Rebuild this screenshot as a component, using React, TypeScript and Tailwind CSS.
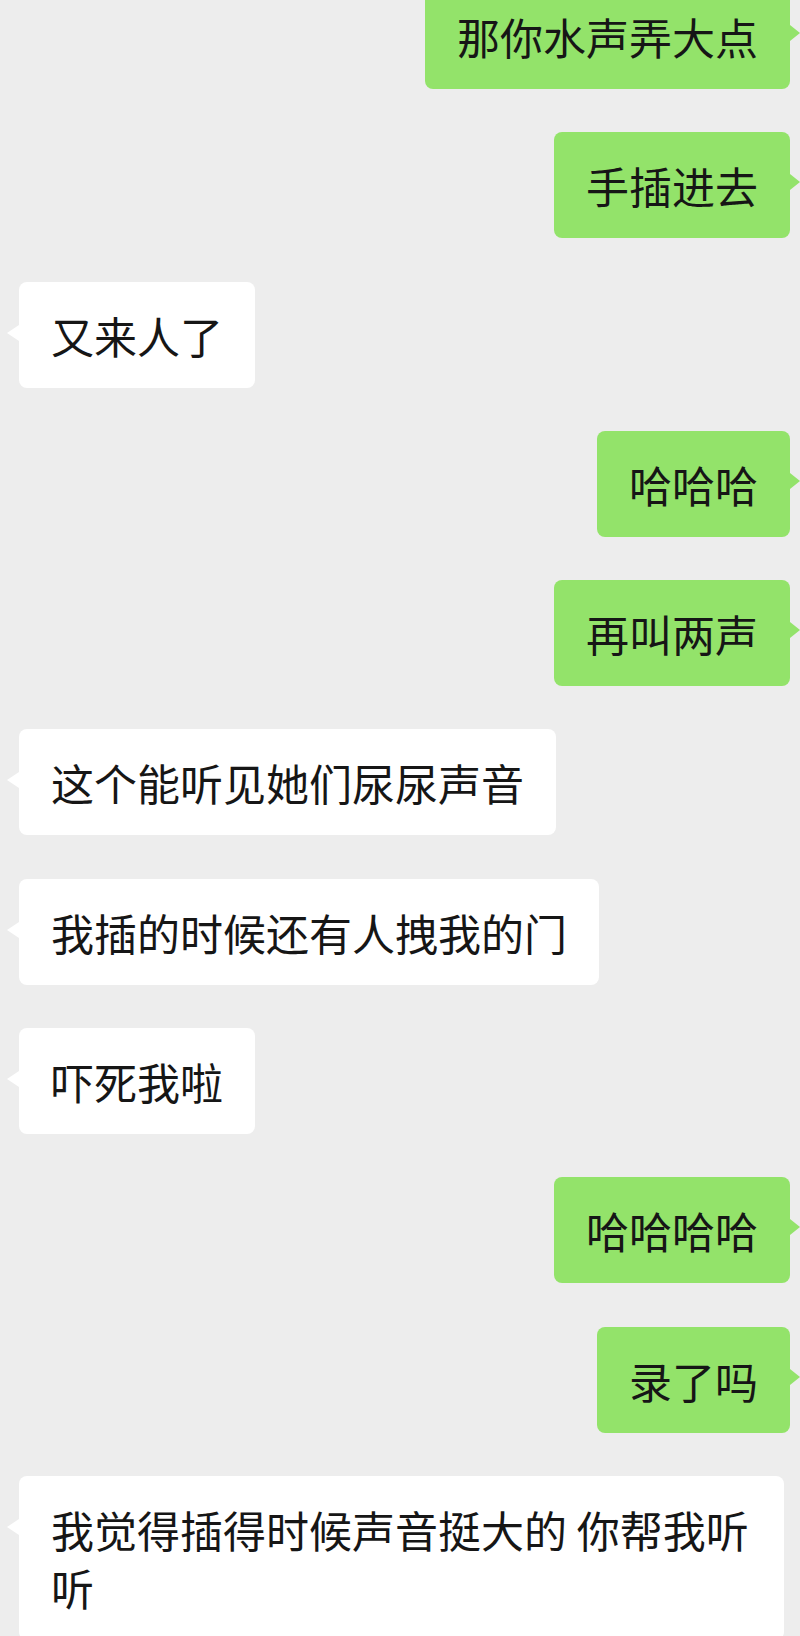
import React from 'react'

type Msg = { side: 'left' | 'right'; text: string }

const messages: Msg[] = [
  { side: 'right', text: '那你水声弄大点' },
  { side: 'right', text: '手插进去' },
  { side: 'left', text: '又来人了' },
  { side: 'right', text: '哈哈哈' },
  { side: 'right', text: '再叫两声' },
  { side: 'left', text: '这个能听见她们尿尿声音' },
  { side: 'left', text: '我插的时候还有人拽我的门' },
  { side: 'left', text: '吓死我啦' },
  { side: 'right', text: '哈哈哈哈' },
  { side: 'right', text: '录了吗' },
  { side: 'left', text: '我觉得插得时候声音挺大的 你帮我听听' },
]

function Bubble({ side, text }: Msg) {
  const mine = side === 'right'
  return (
    <div className={mine ? 'flex justify-end pr-[10px]' : 'flex justify-start pl-[19px]'}>
      <div
        className={
          mine
            ? 'relative max-w-[765px] rounded-[8px] bg-[#93e36a] px-[32px] py-[24px] text-[43px] leading-[58px] text-[#161616]'
            : 'relative max-w-[765px] rounded-[8px] bg-white px-[32px] py-[24px] text-[43px] leading-[58px] text-[#161616]'
        }
      >
        {/* tail */}
        {mine ? (
          <span className="absolute right-[-10px] top-[42px] h-0 w-0 border-y-[8px] border-l-[10px] border-y-transparent border-l-[#93e36a]" />
        ) : (
          <span className="absolute left-[-12px] top-[43px] h-0 w-0 border-y-[8px] border-r-[12px] border-y-transparent border-r-white" />
        )}
        {text}
      </div>
    </div>
  )
}

export default function App() {
  return (
    <div
      className="h-[1636px] w-[800px] overflow-hidden bg-[#ededed]"
      style={{ fontFamily: '"Noto Sans CJK SC", "Noto Sans", sans-serif' }}
    >
      <div className="mt-[-17px] flex flex-col gap-[43.3px]">
        {messages.map((m, i) => (
          <Bubble key={i} {...m} />
        ))}
      </div>
    </div>
  )
}
